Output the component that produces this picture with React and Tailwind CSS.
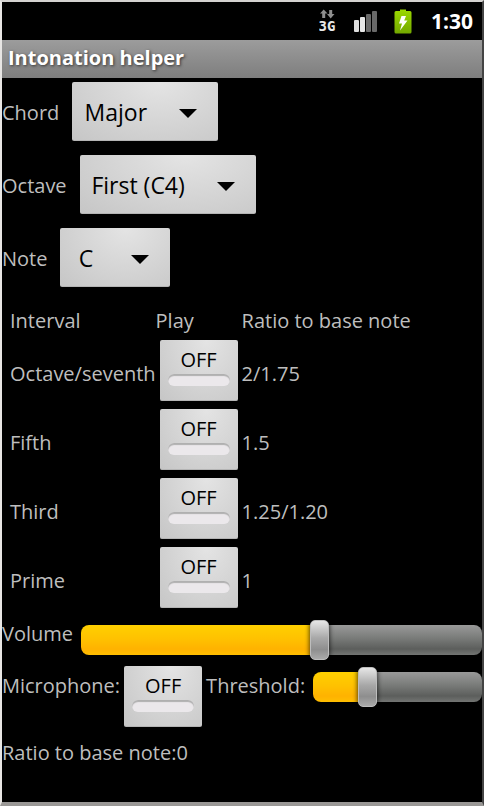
import React, { useState } from 'react';

const intervals = [
  { name: 'Octave/seventh', ratio: '2/1.75' },
  { name: 'Fifth', ratio: '1.5' },
  { name: 'Third', ratio: '1.25/1.20' },
  { name: 'Prime', ratio: '1' },
];

function StatusBar() {
  return (
    <div className="flex h-[38px] items-center justify-end bg-black pr-[9px]">
      {/* Mobile data */}
      <svg width="18" height="24" viewBox="0 0 18 24" className="mr-[17px]" role="img" aria-label="Mobile data">
        <path d="M4.7 0.5 L8.5 4.5 H6.2 V9 H3.2 V4.5 H1 Z" fill="#8f8f8f" />
        <path d="M10.2 1 H13.2 V5 H15.5 L11.7 9.5 L8 5 H10.2 Z" fill="#8f8f8f" />
        <text x="8" y="22" textAnchor="middle" fontFamily="DejaVu Sans Mono, monospace" fontWeight="700" fontSize="14" fill="#e8e8e8">3G</text>
      </svg>
      {/* Signal */}
      <svg width="24" height="22" viewBox="0 0 24 22" className="mr-[16px]" role="img" aria-label="Signal">
        <rect x="0" y="10" width="5" height="12" rx="1" fill="#dedede" />
        <rect x="6" y="7" width="5" height="15" rx="1" fill="#e6e6e6" />
        <rect x="12" y="4" width="5" height="18" rx="1" fill="#696969" />
        <rect x="18" y="1" width="5" height="21" rx="1" fill="#696969" />
      </svg>
      {/* Battery */}
      <svg width="18" height="25" viewBox="0 0 18 25" className="mr-[19px]" role="img" aria-label="Battery charging">
        <defs>
          <linearGradient id="battery" x1="0" y1="0" x2="0" y2="1">
            <stop offset="0" stopColor="#9bd800" />
            <stop offset="1" stopColor="#73a800" />
          </linearGradient>
        </defs>
        <path d="M6 0.5 H12 V2 H16 Q17.5 2 17.5 3.5 V23 Q17.5 24.5 16 24.5 H2 Q0.5 24.5 0.5 23 V3.5 Q0.5 2 2 2 H6 Z" fill="url(#battery)" />
        <path d="M7.5 7 H12 L10.2 11.5 H13.5 L6 21.5 L8 14.5 H5 Z" fill="#fff" />
      </svg>
      <span className="text-[21px] leading-7 font-bold text-white">1:30</span>
    </div>
  );
}

function Spinner({ id, label, options, width }) {
  return (
    <div className="flex items-center gap-[13px] pt-1 pb-[10px]">
      <label htmlFor={id} className="pt-[2px]">{label}</label>
      <div className="relative">
        <select
          id={id}
          className={`block h-[59px] appearance-none rounded-[2px] border-b border-[#b4b4b4] bg-radial-[at_60%_0%] from-[#e4e4e4] to-[#c6c6c6] pt-[2px] pr-[59px] text-center text-[23px] leading-9 text-black outline-none ${width}`}
        >
          {options.map((o) => (
            <option key={o}>{o}</option>
          ))}
        </select>
        <svg width="18" height="9" viewBox="0 0 18 9" className="pointer-events-none absolute top-[27px] right-[21px]" aria-hidden="true">
          <path d="M0 0 H18 L9 9 Z" fill="#000" />
        </svg>
      </div>
    </div>
  );
}

function Toggle({ label }) {
  const [on, setOn] = useState(false);
  return (
    <button
      type="button"
      aria-label={label}
      aria-pressed={on}
      onClick={() => setOn(!on)}
      className="m-1 block h-[61px] w-[78px] shrink-0 rounded-[2px] border-b border-[#b4b4b4] bg-radial-[at_60%_0%] from-[#e4e4e4] to-[#c6c6c6] px-2 pb-[9px] text-black"
    >
      {on ? 'ON' : 'OFF'}
      <span
        className={`block h-3 rounded-full shadow-[inset_0_2px_1px_#b0b0b0] ${on ? 'bg-[#8fd400]' : 'bg-[#ebe8eb]'}`}
      />
    </button>
  );
}

function Slider({ id, initial }) {
  const [value, setValue] = useState(initial);
  return (
    <input
      id={id}
      type="range"
      min="0"
      max="100"
      value={value}
      onChange={(e) => setValue(e.target.value)}
      style={{ '--fill': `${value}%` }}
      className="h-[30px] min-w-0 flex-1 appearance-none rounded-lg bg-[linear-gradient(#ffd000,#ffc000_50%,#ffb200_80%,#ffbe00),linear-gradient(#999,#7c7e7c_40%,#5c5e5c_80%,#737573)] bg-[length:var(--fill)_100%,100%_100%] bg-no-repeat outline-none [&::-webkit-slider-thumb]:h-10 [&::-webkit-slider-thumb]:w-[19px] [&::-webkit-slider-thumb]:appearance-none [&::-webkit-slider-thumb]:rounded-[5px] [&::-webkit-slider-thumb]:border [&::-webkit-slider-thumb]:border-[#bdbdbd] [&::-webkit-slider-thumb]:bg-[linear-gradient(#e6e6e6,#a8a8a8_45%,#8e8e8e_75%,#aaa)] [&::-webkit-slider-thumb]:shadow-[0_0_4px_1px_rgba(0,0,0,0.6)]"
    />
  );
}

export default function App() {
  return (
    <div className="flex min-h-screen flex-col border-t-2 border-r-2 border-b-4 border-l-2 border-t-[#d4d2d0] border-r-[#444] border-b-[#9a9896] border-l-[#e8e6e4] bg-black font-['Open_Sans',sans-serif] text-xl leading-7 text-[#bebebe]">
      <StatusBar />
      <h1 className="h-[38px] bg-linear-to-b from-[#9c9c9c] to-[#7e7e7e] px-[6px] py-1 font-bold text-white [text-shadow:1px_1px_3px_#333]">
        Intonation helper
      </h1>

      <Spinner id="chord" label="Chord" options={['Major', 'Minor']} width="w-[146px]" />
      <Spinner id="octave" label="Octave" options={['First (C4)']} width="w-[176px]" />
      <Spinner id="note" label="Note" options={['C', 'D', 'E', 'F', 'G', 'A', 'B']} width="w-[110px]" />

      <div className="p-2">
        <table className="border-collapse text-left">
          <thead>
            <tr className="h-[31px]">
              <th className="p-0 font-normal">Interval</th>
              <th className="p-0 font-normal">Play</th>
              <th className="p-0 font-normal">Ratio to base note</th>
            </tr>
          </thead>
          <tbody>
            {intervals.map((row) => (
              <tr key={row.name}>
                <td className="p-0 pt-[6px]">{row.name}</td>
                <td className="p-0">
                  <Toggle label={`Play ${row.name}`} />
                </td>
                <td className="p-0 pt-[6px]">{row.ratio}</td>
              </tr>
            ))}
          </tbody>
        </table>
      </div>

      <div className="flex h-[42px] gap-2">
        <label htmlFor="volume">Volume</label>
        <div className="flex min-w-0 flex-1 pt-[5px]">
          <Slider id="volume" initial={60} />
        </div>
      </div>

      <div className="flex items-start">
        <span className="pt-[10px]">Microphone:</span>
        <Toggle label="Microphone" />
        <label htmlFor="threshold" className="pt-[10px] pr-2">Threshold:</label>
        <div className="flex min-w-0 flex-1 pt-[10px]">
          <Slider id="threshold" initial={30} />
        </div>
      </div>

      <p className="pt-2">Ratio to base note:0</p>
    </div>
  );
}
